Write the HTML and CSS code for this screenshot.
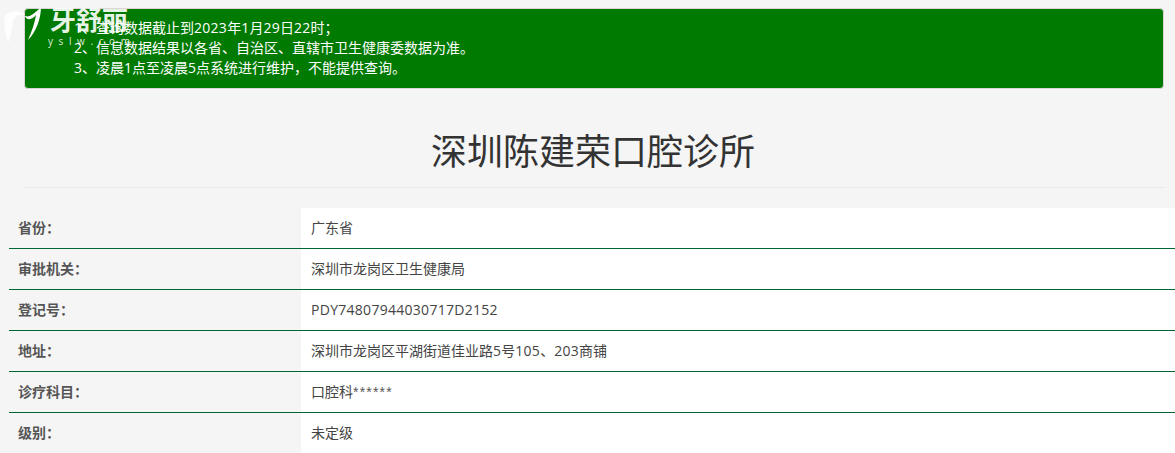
FILE: index.html
```html
<!DOCTYPE html>
<html lang="zh-CN">
<head>
<meta charset="utf-8">
<title>深圳陈建荣口腔诊所</title>
<link rel="stylesheet" href="styles.css">
</head>
<body>
<a class="logo" href="#">
  <svg class="logo-mark" width="44" height="44" viewBox="0 0 44 44" aria-hidden="true">
    <path d="M5 14C9 9 16 7 25 13C19 12 14 14 13 20C12 28 10 36 8 41C6 34 3 22 5 14Z" fill="#fff" fill-opacity=".9"/>
    <path d="M24 13C28 17 34 12 41 5C41 15 37 29 28 38C32 29 35 20 36 13C32 18 27 19 24 13Z" fill="#fff"/>
  </svg>
  <span class="logo-text">
    <span class="logo-name">牙舒丽</span>
    <span class="logo-url">yslw.com</span>
  </span>
</a>
<main class="container">
  <div class="alert">
    <p>1、查询数据截止到<span class="num">2023</span>年<span class="num">1</span>月<span class="num">29</span>日<span class="num">22</span>时；</p>
    <p>2、信息数据结果以各省、自治区、直辖市卫生健康委数据为准。</p>
    <p>3、凌晨1点至凌晨5点系统进行维护，不能提供查询。</p>
  </div>
  <h1 class="title">深圳陈建荣口腔诊所</h1>
</main>
<table class="info">
  <tr><th>省份：</th><td>广东省</td></tr>
  <tr><th>审批机关：</th><td>深圳市龙岗区卫生健康局</td></tr>
  <tr><th>登记号：</th><td><span class="num">PDY74807944030717D2152</span></td></tr>
  <tr><th>地址：</th><td>深圳市龙岗区平湖街道佳业路<span class="num">5</span>号<span class="num">105</span>、<span class="num">203</span>商铺</td></tr>
  <tr><th>诊疗科目：</th><td>口腔科<span class="stars">******</span></td></tr>
  <tr><th>级别：</th><td>未定级</td></tr>
</table>
</body>
</html>
```
FILE: styles.css
```css
* { box-sizing: border-box; }
html, body { height: 100%; overflow: hidden; }
body {
  margin: 0;
  background: #f5f5f5;
  color: #333;
  font: 14px/20px "Open Sans", "Noto Sans CJK SC", sans-serif;
}
.logo {
  position: absolute;
  left: 0;
  top: 2px;
  display: flex;
  color: #fff;
  text-decoration: none;
}
.logo-mark { flex: none; }
.logo-text { display: flex; flex-direction: column; margin-left: 6px; padding-top: 1px; }
.logo-name {
  font: 700 26px/32px "Noto Sans CJK SC", serif;
  width: 90px;
  opacity: .9;
}
.logo-url {
  font: 10px/12px "Open Sans", sans-serif;
  letter-spacing: 5.6px;
  margin-left: -2px;
  opacity: .85;
}
.container { padding: 8px 11px 0 24px; }
.alert {
  height: 81px;
  padding: 9px 49px;
  background: #007a00;
  border: 1px solid #dcd3d3;
  border-radius: 4px;
  color: #fff;
  font-size: 14px;
}
.alert p { margin: 0; }
.title {
  margin: 38px 0 0;
  padding: 0 2px 11px 0;
  border-bottom: 1px solid #eaeaea;
  font-size: 36px;
  line-height: 49px;
  font-weight: 400;
  text-align: center;
}
.info {
  margin: 20px 0 0 9px;
  width: 1166px;
  border-collapse: collapse;
  table-layout: fixed;
}
.info tr { height: 41px; border-bottom: 1px solid #006633; }
.info tr:first-child { height: 40px; }
.info tr:last-child { border-bottom: 0; }
.info th, .info td { padding: 0 10px; text-align: left; font-size: 14px; }
.info th { width: 292px; padding-left: 9px; font-weight: 700; color: #555; }
.info td { background: #fff; color: #444; }
.num { letter-spacing: .28px; }
.stars { font-family: "Liberation Sans", sans-serif; letter-spacing: 1.2px; color: #555; }
```
